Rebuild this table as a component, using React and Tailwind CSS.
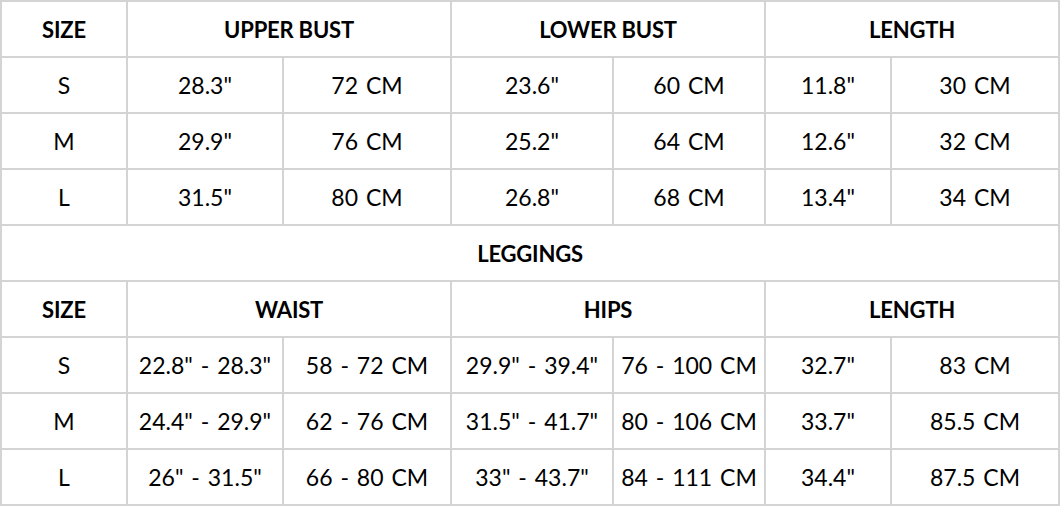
const tops = [
  ['S', '28.3"', '72 CM', '23.6"', '60 CM', '11.8"', '30 CM'],
  ['M', '29.9"', '76 CM', '25.2"', '64 CM', '12.6"', '32 CM'],
  ['L', '31.5"', '80 CM', '26.8"', '68 CM', '13.4"', '34 CM'],
];

const leggings = [
  ['S', '22.8" - 28.3"', '58 - 72 CM', '29.9" - 39.4"', '76 - 100 CM', '32.7"', '83 CM'],
  ['M', '24.4" - 29.9"', '62 - 76 CM', '31.5" - 41.7"', '80 - 106 CM', '33.7"', '85.5 CM'],
  ['L', '26" - 31.5"', '66 - 80 CM', '33" - 43.7"', '84 - 111 CM', '34.4"', '87.5 CM'],
];

function Cell({ children, bold, span }) {
  return (
    <div
      className={`bg-white flex items-center justify-center whitespace-nowrap text-black ${bold ? 'font-bold text-[22px] tracking-[-0.2px]' : 'text-[23px] [word-spacing:2px]'} ${span === 2 ? 'col-span-2' : ''} ${span === 7 ? 'col-span-7' : ''}`}
    >
      {children}
    </div>
  );
}

function Header({ cols }) {
  return (
    <>
      <Cell bold>SIZE</Cell>
      {cols.map((c) => (
        <Cell key={c} bold span={2}>{c}</Cell>
      ))}
    </>
  );
}

function Rows({ rows }) {
  return rows.map((r) =>
    r.map((v, i) => <Cell key={r[0] + i}>{v}</Cell>)
  );
}

export default function App() {
  return (
    <div
      className="grid grid-cols-[124px_154px_166px_160px_150px_124px_166px] auto-rows-[54px] gap-[2px] p-[2px] bg-[#d4d4d4] w-[1060px]"
      style={{ fontFamily: 'Lato, "Open Sans", sans-serif' }}
    >
      <Header cols={['UPPER BUST', 'LOWER BUST', 'LENGTH']} />
      <Rows rows={tops} />
      <Cell bold span={7}>LEGGINGS</Cell>
      <Header cols={['WAIST', 'HIPS', 'LENGTH']} />
      <Rows rows={leggings} />
    </div>
  );
}
